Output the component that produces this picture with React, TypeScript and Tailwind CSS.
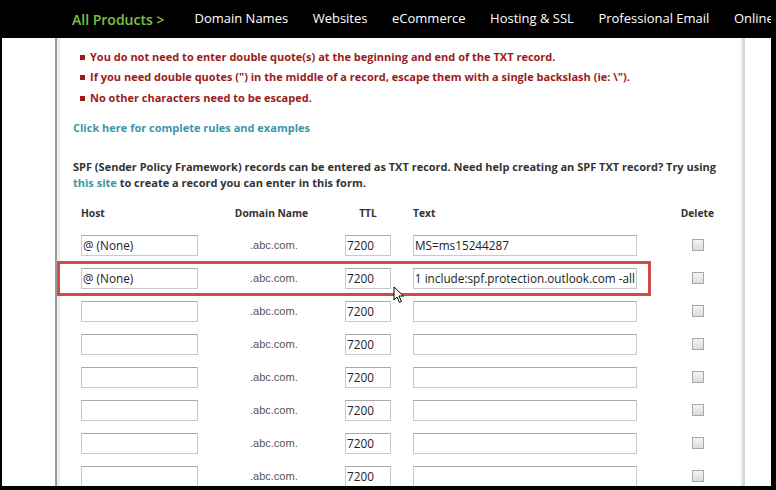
const navItems = ["Domain Names", "Websites", "eCommerce", "Hosting & SSL", "Professional Email", "Online"];

const rows = [
  { host: "@ (None)", text: "MS=ms15244287" },
  { host: "@ (None)", text: "1 include:spf.protection.outlook.com -all", highlight: true },
  { host: "", text: "" },
  { host: "", text: "" },
  { host: "", text: "" },
  { host: "", text: "" },
  { host: "", text: "" },
  { host: "", text: "" },
];

function Cursor() {
  return (
    <svg width="12" height="18" viewBox="0 0 12 18" className="absolute left-[312px] top-[24px]">
      <path d="M1 1 L1 14 L4 11 L6.5 16.5 L8.5 15.5 L6 10 L10.5 10 Z" fill="#fff" stroke="#000" strokeWidth="1" strokeLinejoin="round" />
    </svg>
  );
}

function Row({ host, text, highlight }: { host: string; text: string; highlight?: boolean }) {
  return (
    <div className="relative flex items-center h-[33px]">
      {highlight && (
        <div className="absolute left-[-24px] top-[-1px] w-[594px] h-[35px] border-[3px] border-[#d2494a]" />
      )}
      <div className="w-[117px] h-[21px] border border-[#c9c9c9] border-t-[#a9a9a9] bg-white px-[1px] text-[11.75px] leading-[19px] text-[#222]">
        {host}
      </div>
      <div className="w-[147px] pl-[52px] text-[11px] text-[#555] font-['Liberation_Sans',sans-serif]">
        .abc.com.
      </div>
      <div className="w-[46px] h-[21px] border border-[#c9c9c9] border-t-[#a9a9a9] bg-white px-[1px] text-[11.75px] leading-[19px] text-[#222]">
        7200
      </div>
      <div className="ml-[22px] w-[224px] h-[21px] border border-[#c9c9c9] border-t-[#a9a9a9] bg-white px-[1px] text-[11.75px] leading-[19px] text-[#222] overflow-hidden whitespace-nowrap flex justify-end">
        <span className={highlight ? "" : "mr-auto"}>{text}</span>
      </div>
      <div className="w-[85px] flex justify-end pr-[18px]">
        <div className="w-[12px] h-[12px] border border-[#a8a8a8] bg-gradient-to-b from-[#f4f4f4] to-[#dcdcdc]" />
      </div>
      {highlight && <Cursor />}
    </div>
  );
}

export default function App() {
  return (
    <div className="w-[776px] h-[490px] bg-black overflow-hidden font-['Open_Sans',sans-serif] flex flex-col">
      <nav className="h-[38px] shrink-0 flex items-center text-white text-[13px] whitespace-nowrap overflow-hidden mr-[5px]">
        <span className="ml-[72px] text-[#7cc143] text-[14px] font-semibold shrink-0">All Products &gt;</span>
        <div className="ml-[30px] flex gap-[24.5px] shrink-0">
          {navItems.map((n) => (
            <span key={n}>{n}</span>
          ))}
        </div>
      </nav>
      <div className="ml-[2px] mr-[5px] mb-[4px] flex-1 bg-white flex overflow-hidden">
        <div className="ml-[53px] w-[690px] border-l-2 border-[#9c9c9c] border-r-2 border-r-[#d4d4d4]">
          <div className="h-full border-l-[3px] border-[#ececec] border-r-[2px] border-r-[#e8e8e8] pl-[13px] pt-[11px]">
            <ul className="text-[11px] font-bold text-[#9a1b1b] flex flex-col gap-[4.5px] ml-[7px]">
              <li className="flex items-center h-[16px]"><span className="w-[5px] h-[5px] bg-[#a01c1c] mr-[5px]" />You do not need to enter double quote(s) at the beginning and end of the TXT record.</li>
              <li className="flex items-center h-[16px]"><span className="w-[5px] h-[5px] bg-[#a01c1c] mr-[5px]" />If you need double quotes (&quot;) in the middle of a record, escape them with a single backslash (ie: \&quot;).</li>
              <li className="flex items-center h-[16px]"><span className="w-[5px] h-[5px] bg-[#a01c1c] mr-[5px]" />No other characters need to be escaped.</li>
            </ul>
            <p className="mt-[14px] text-[11px] font-bold text-[#3a97a7]">Click here for complete rules and examples</p>
            <p className="mt-[22px] text-[11px] font-bold text-[#333] leading-[16px] whitespace-nowrap">
              SPF (Sender Policy Framework) records can be entered as TXT record. Need help creating an SPF TXT record? Try using
              <br />
              <span className="text-[#3a97a7]">this site</span> to create a record you can enter in this form.
            </p>
            <div className="ml-[8px] mt-[15px] text-[10.25px] font-bold text-[#333] flex h-[16px] items-center">
              <span className="w-[117px]">Host</span>
              <span className="w-[147px] text-center">Domain Name</span>
              <span className="w-[46px] text-center">TTL</span>
              <span className="ml-[22px] w-[224px]">Text</span>
              <span className="w-[85px] text-right pr-[8px]">Delete</span>
            </div>
            <div className="ml-[8px] mt-[7px] flex flex-col">
              {rows.map((r, i) => (
                <Row key={i} {...r} />
              ))}
            </div>
          </div>
        </div>
      </div>
    </div>
  );
}
